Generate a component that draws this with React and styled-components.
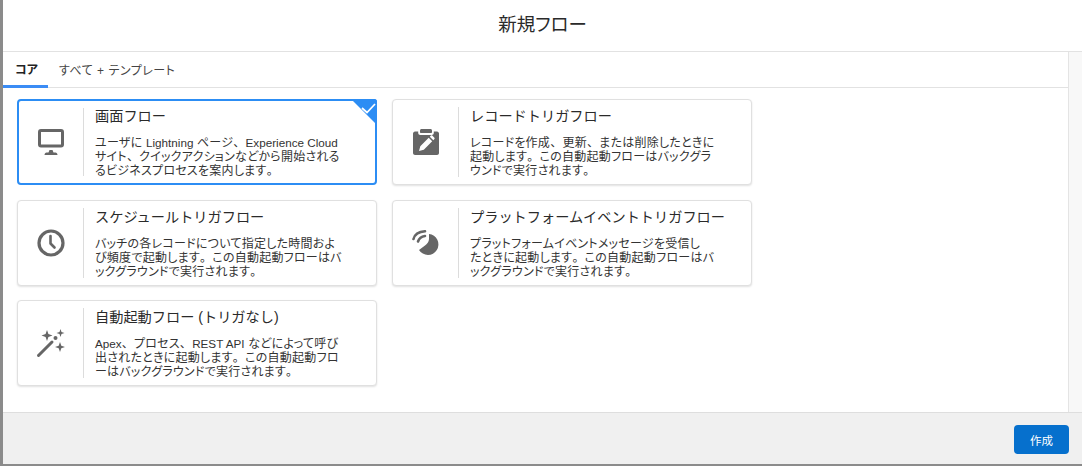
import React from 'react'
import styled, { createGlobalStyle } from 'styled-components';

const GlobalStyle = createGlobalStyle`
    html, body {
        margin: 0;
        padding: 0;
        background: #8b8b8b;
    }
    * {
        box-sizing: border-box;
    }
`;

const Shell = styled.div`
    display: flex;
    flex-direction: column;
    width: 1079px;
    height: 464px;
    margin-left: 3px;
    background: white;
    color: #1a1a1a;
    font-family: "Liberation Sans", "Noto Sans CJK JP", sans-serif;
    font-feature-settings: "palt";
    overflow: hidden;
`;

const Header = styled.div`
    display: flex;
    flex: 0 0 52px;
    align-items: center;
    justify-content: center;
    padding-bottom: 5px;
    border-bottom: 1px solid #e2e2e2;
    font-size: 18.5px;
    color: #2a2a2a;
`;

const Middle = styled.div`
    display: flex;
    flex: 1;
    min-height: 0;
`;

const Main = styled.div`
    flex: 1;
    min-width: 0;
`;

const Track = styled.div`
    flex: 0 0 14px;
    background: #f8f8f8;
    border-left: 1px solid #e4e4e4;
`;

const Tabs = styled.div`
    display: flex;
    height: 36px;
    border-bottom: 1px solid #e2e2e2;
`;

const Tab = styled.div`
    display: flex;
    align-items: center;
    height: 36px;
    padding: 0 ${p => p.$active ? '10px' : '0'} 1px ${p => p.$active ? '12px' : '11px'};
    font-size: 12px;
    letter-spacing: ${p => p.$active ? '0' : '0.5px'};
    font-weight: ${p => p.$active ? 700 : 400};
    color: ${p => p.$active ? '#222' : '#444'};
    border-bottom: ${p => p.$active ? '3px solid #3b8cf5' : 'none'};
`;

const Grid = styled.div`
    display: grid;
    grid-template-columns: 360px 360px;
    grid-auto-rows: 86px;
    column-gap: 15px;
    row-gap: 14.5px;
    padding: 11px 0 0 14px;
`;

const Card = styled.div`
    position: relative;
    display: flex;
    padding: 7px 0;
    border-radius: 4px;
    border: ${p => p.$selected ? '2px solid #2c8df4' : '1px solid #e0e0e0'};
    box-shadow: ${p => p.$selected ? 'none' : '0 1px 2px rgba(0, 0, 0, 0.12)'};
    background: white;
`;

const IconCell = styled.div`
    display: flex;
    flex: 0 0 66px;
    align-items: center;
    justify-content: center;
    margin-left: ${p => p.$selected ? '-1px' : '0'};
    border-right: 1px solid #dcdcdc;
    color: #666;
`;

const Body = styled.div`
    flex: 1;
    padding-left: 11px;
    margin-top: ${p => p.$selected ? '-1px' : '0'};
`;

const Title = styled.div`
    font-size: 14.2px;
    font-feature-settings: normal;
    line-height: 18px;
    margin-bottom: 11px;
    color: #2a2a2a;
    white-space: nowrap;
`;

const Description = styled.div`
    font-size: 12px;
    letter-spacing: 0.25px;
    line-height: 14px;
    color: #333;
    white-space: pre-line;
`;

const Punct = styled.span`
    font-feature-settings: normal;
`;

const Latin = styled.span`
    font-size: 11.7px;
    letter-spacing: 0;
`;

const Corner = styled.svg`
    position: absolute;
    top: -2px;
    right: -2px;
`;

const Footer = styled.div`
    display: flex;
    flex: 0 0 52px;
    justify-content: flex-end;
    align-items: flex-start;
    padding: 12px 13px 0 0;
    background: #f0f0f0;
    border-top: 1px solid #dedede;
`;

const CreateButton = styled.button`
    width: 55px;
    height: 29px;
    padding: 0;
    border: none;
    border-radius: 4px;
    background: #0670cd;
    color: white;
    font-size: 11.5px;
    font-family: inherit;
    font-feature-settings: inherit;
`;

const MonitorIcon = () => (
    <svg width="26" height="26" viewBox="0 0 26 26" fill="none">
        <rect x="1.5" y="1.5" width="23" height="15.500" rx="1.500" stroke="#666" strokeWidth="3" />
        <path d="M6.500 26c0-1.500 1-2.500 2-2.500h2l1-2.500h3l1 2.500h2c1 0 2 1 2 2.500z" fill="#666" />
    </svg>
);

const ClipboardIcon = () => (
    <svg width="26" height="26" viewBox="0 0 26 26">
        <path d="M7 1.500C7 .7 7.700 0 8.500 0h9c.8 0 1.500.7 1.500 1.500V3c0 .6-.4 1-1 1H8c-.6 0-1-.4-1-1z" fill="#666" />
        <path d="M2 2.500h3.200V4c0 1 1 2 2 2h11.600c1 0 2-1 2-2V2.500H24c1 0 2 1 2 2V24c0 1.100-1 2-2 2H2c-1 0-2-.9-2-2V4.500c0-1 1-2 2-2z" fill="#666" />
        <path d="M6 22l1.300-4.800 8.400-8.400 3.500 3.500-8.400 8.400zM16.800 7.700l1.100-1.100c.4-.4 1-.4 1.400 0l2.100 2.100c.4.4.4 1 0 1.400l-1.100 1.100z" fill="white" />
    </svg>
);

const ClockIcon = () => (
    <svg width="28" height="28" viewBox="0 0 28 28" fill="none">
        <circle cx="14" cy="14" r="12" stroke="#666" strokeWidth="3.200" />
        <path d="M13.500 7v7.500l4 4" stroke="#666" strokeWidth="2.600" strokeLinecap="round" strokeLinejoin="round" />
    </svg>
);

const PlatformIcon = () => (
    <svg width="27" height="26" viewBox="0 0 27 26" fill="none">
        <path d="M1.500 9C2.500 5 6.500 1.800 13 1.300" stroke="#666" strokeWidth="2.600" strokeLinecap="round" />
        <path d="M6 11.500C7 8.500 9.500 6.500 13 6" stroke="#666" strokeWidth="2.600" strokeLinecap="round" />
        <path d="M17 4A10.500 10.500 0 1 1 7 20C9 18.500 11 17 13 15.500S17 12 17 9z" fill="#666" />
    </svg>
);

const WandIcon = () => (
    <svg width="30" height="30" viewBox="0 0 30 30">
        <path d="M2.500 27.500L16 14" stroke="#666" strokeWidth="3" strokeLinecap="round" />
        <path d="M11 2l1.400 4.100 4.100 1.400-4.100 1.400L11 13 9.600 8.900 5.500 7.500l4.100-1.400z" fill="#666" />
        <path d="M24.500 1l1 3 3 1-3 1-1 3-1-3-3-1 3-1z" fill="#666" />
        <path d="M24 14l1.300 3.700L29 19l-3.700 1.300L24 24l-1.300-3.700L19 19l3.700-1.300z" fill="#666" />
        <circle cx="19.500" cy="10" r="2" fill="#666" />
    </svg>
);

// kana keep the tight spacing, punctuation stays full width and latin runs smaller
const formatDescription = text => text.split(/([、。]|[A-Za-z][A-Za-z ]*[A-Za-z])/).map((part, i) => {
    if (i % 2 === 0) return part;
    return /[、。]/.test(part)
        ? <Punct key={ i }>{ part }</Punct>
        : <Latin key={ i }>{ part }</Latin>;
});

const flows = [
    {
        title: '画面フロー',
        icon: <MonitorIcon />,
        selected: true,
        description: 'ユーザに Lightning ページ、Experience Cloud\nサイト、クイックアクションなどから開始される\nるビジネスプロセスを案内します。',
    },
    {
        title: 'レコードトリガフロー',
        icon: <ClipboardIcon />,
        description: 'レコードを作成、更新、または削除したときに\n起動します。この自動起動フローはバックグラ\nウンドで実行されます。',
    },
    {
        title: 'スケジュールトリガフロー',
        icon: <ClockIcon />,
        description: 'バッチの各レコードについて指定した時間およ\nび頻度で起動します。この自動起動フローはバ\nックグラウンドで実行されます。',
    },
    {
        title: 'プラットフォームイベントトリガフロー',
        icon: <PlatformIcon />,
        description: 'プラットフォームイベントメッセージを受信し\nたときに起動します。この自動起動フローはバ\nックグラウンドで実行されます。',
    },
    {
        title: '自動起動フロー (トリガなし)',
        icon: <WandIcon />,
        description: 'Apex、プロセス、REST API などによって呼び\n出されたときに起動します。この自動起動フロ\nーはバックグラウンドで実行されます。',
    },
];

const App = () => {
    return (
        <Shell>
            <GlobalStyle />
            <Header>新規フロー</Header>
            <Middle>
                <Main>
                    <Tabs>
                        <Tab $active>コア</Tab>
                        <Tab>すべて + テンプレート</Tab>
                    </Tabs>
                    <Grid>
                        {flows.map(f => (
                            <Card key={ f.title } $selected={ f.selected }>
                                <IconCell $selected={ f.selected }>{ f.icon }</IconCell>
                                <Body $selected={ f.selected }>
                                    <Title>{ f.title }</Title>
                                    <Description>{ formatDescription(f.description) }</Description>
                                </Body>
                                {f.selected ? (
                                    <Corner width="26" height="26" viewBox="0 0 26 26">
                                        <path d="M0 0h24c1 0 2 1 2 2v24z" fill="#2c8df4" />
                                        <path d="M11 9l5 4.500 8-8.500" fill="none" stroke="white" strokeWidth="1.700" />
                                    </Corner>
                                ) : null}
                            </Card>
                        ))}
                    </Grid>
                </Main>
                <Track />
            </Middle>
            <Footer>
                <CreateButton>作成</CreateButton>
            </Footer>
        </Shell>
    );
}

export default App;
